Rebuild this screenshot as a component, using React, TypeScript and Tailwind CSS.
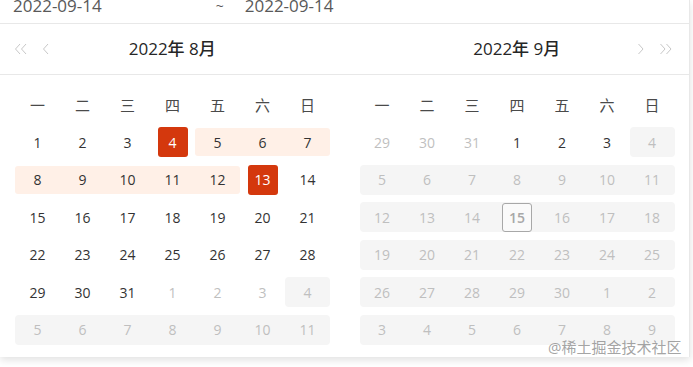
import React from 'react'

type Kind = 'normal' | 'muted' | 'disabled' | 'range' | 'selected' | 'today'
type Cell = { t: number; k: Kind }

const weekdays = ['一', '二', '三', '四', '五', '六', '日']

function build(list: [number, Kind][]): Cell[][] {
  const rows: Cell[][] = []
  for (let i = 0; i < list.length; i += 7) {
    rows.push(list.slice(i, i + 7).map(([t, k]) => ({ t, k })))
  }
  return rows
}

function augustCells(): Cell[][] {
  const list: [number, Kind][] = []
  for (let d = 1; d <= 31; d++) {
    let k: Kind = 'normal'
    if (d === 4 || d === 13) k = 'selected'
    else if (d > 4 && d < 13) k = 'range'
    list.push([d, k])
  }
  list.push([1, 'muted'], [2, 'muted'], [3, 'muted'], [4, 'disabled'])
  for (let d = 5; d <= 11; d++) list.push([d, 'disabled'])
  return build(list)
}

function septemberCells(): Cell[][] {
  const list: [number, Kind][] = [[29, 'muted'], [30, 'muted'], [31, 'muted']]
  for (let d = 1; d <= 30; d++) {
    let k: Kind = 'disabled'
    if (d <= 3) k = 'normal'
    else if (d === 15) k = 'today'
    list.push([d, k])
  }
  for (let d = 1; d <= 9; d++) list.push([d, 'disabled'])
  return build(list)
}

const hasBg = (k?: Kind) => k === 'disabled' || k === 'today'

function DayCell({ row, i }: { row: Cell[]; i: number }) {
  const c = row[i]
  const prev = row[i - 1]?.k
  const next = row[i + 1]?.k

  if (c.k === 'selected') {
    return (
      <div className="flex items-center justify-center">
        <span className="flex h-[30px] w-[30px] items-center justify-center rounded-[3px] bg-[#d4380d] text-white">
          {c.t}
        </span>
      </div>
    )
  }

  if (c.k === 'range') {
    return (
      <div className="flex items-center">
        <span
          className={
            'flex h-[28px] w-full items-center justify-center bg-[#fff0e7] text-[#333] ' +
            (prev !== 'range' ? 'rounded-l-[3px] ' : '') +
            (next !== 'range' ? 'rounded-r-[3px]' : '')
          }
        >
          {c.t}
        </span>
      </div>
    )
  }

  if (hasBg(c.k)) {
    return (
      <div className="flex items-center">
        <span
          className={
            'flex h-[30px] w-full items-center justify-center bg-[#f5f5f5] text-[#bfbfbf] ' +
            (!hasBg(prev) ? 'rounded-l-[4px] ' : '') +
            (!hasBg(next) ? 'rounded-r-[4px]' : '')
          }
        >
          {c.k === 'today' ? (
            <span className="flex h-[29px] w-[30px] items-center justify-center rounded-[3px] border border-[#a8a8a8] bg-[#fafafa] font-semibold text-[#a8a8a8]">
              {c.t}
            </span>
          ) : (
            c.t
          )}
        </span>
      </div>
    )
  }

  return (
    <div className={'flex items-center justify-center ' + (c.k === 'muted' ? 'text-[#bfbfbf]' : 'text-[#333]')}>
      {c.t}
    </div>
  )
}

function Month({ rows }: { rows: Cell[][] }) {
  return (
    <div className="w-[345px] pl-[15px] pt-[11px] pb-[8px]">
      <div className="w-[315px]">
        <div className="grid h-[37.5px] grid-cols-7 text-[15px] text-[#4a4a4a]">
          {weekdays.map((w) => (
            <div key={w} className="flex items-center justify-center">
              {w}
            </div>
          ))}
        </div>
        {rows.map((row, r) => (
          <div key={r} className="grid h-[37.5px] grid-cols-7 text-[14px]">
            {row.map((_, i) => (
              <DayCell key={i} row={row} i={i} />
            ))}
          </div>
        ))}
      </div>
    </div>
  )
}

function Chevron({ dir, double }: { dir: 'l' | 'r'; double?: boolean }) {
  const one = dir === 'l' ? 'M6 1 L1.5 6 L6 11' : 'M1.5 1 L6 6 L1.5 11'
  const two = dir === 'l' ? 'M12 1 L7.5 6 L12 11' : 'M7.5 1 L12 6 L7.5 11'
  return (
    <svg width={double ? 14 : 8} height="12" viewBox={double ? '0 0 14 12' : '0 0 8 12'} fill="none">
      <path d={one} stroke="#c8c8c8" strokeWidth="1" />
      {double && <path d={two} stroke="#c8c8c8" strokeWidth="1" />}
    </svg>
  )
}

export default function App() {
  return (
    <div
      className="relative h-[367px] w-[693px] overflow-hidden bg-white"
      style={{ fontFamily: '"Open Sans", "Noto Sans CJK SC", sans-serif' }}
    >
      <div className="w-[690px] border-r border-[#e8e8e8] bg-white shadow-[0_3px_8px_rgba(0,0,0,0.12)]">
        <div className="h-[24px] border-b border-[#e8e8e8] overflow-hidden">
          <div className="-mt-[6px] flex text-[17px] leading-[24px] text-[#595959]">
            <span className="ml-[13px]">2022-09-14</span>
            <span className="ml-[114px] text-[14px]">~</span>
            <span className="ml-[21px]">2022-09-14</span>
          </div>
        </div>
        <div className="flex h-[51px] border-b border-[#e8e8e8]">
          <div className="relative flex w-[345px] items-center justify-center">
            <div className="absolute left-[14px] flex items-center gap-[14px]">
              <Chevron dir="l" double />
              <Chevron dir="l" />
            </div>
            <span className="text-[17px] font-medium text-[#262626]">2022年 8月</span>
          </div>
          <div className="relative flex w-[345px] items-center justify-center">
            <span className="text-[17px] font-medium text-[#262626]">2022年 9月</span>
            <div className="absolute right-[16px] flex items-center gap-[14px]">
              <Chevron dir="r" />
              <Chevron dir="r" double />
            </div>
          </div>
        </div>
        <div className="flex">
          <Month rows={augustCells()} />
          <Month rows={septemberCells()} />
        </div>
      </div>
      <span className="absolute left-[548px] top-[336px] text-[15px] text-[#8c8c8c]/80">
        @稀土掘金技术社区
      </span>
    </div>
  )
}
